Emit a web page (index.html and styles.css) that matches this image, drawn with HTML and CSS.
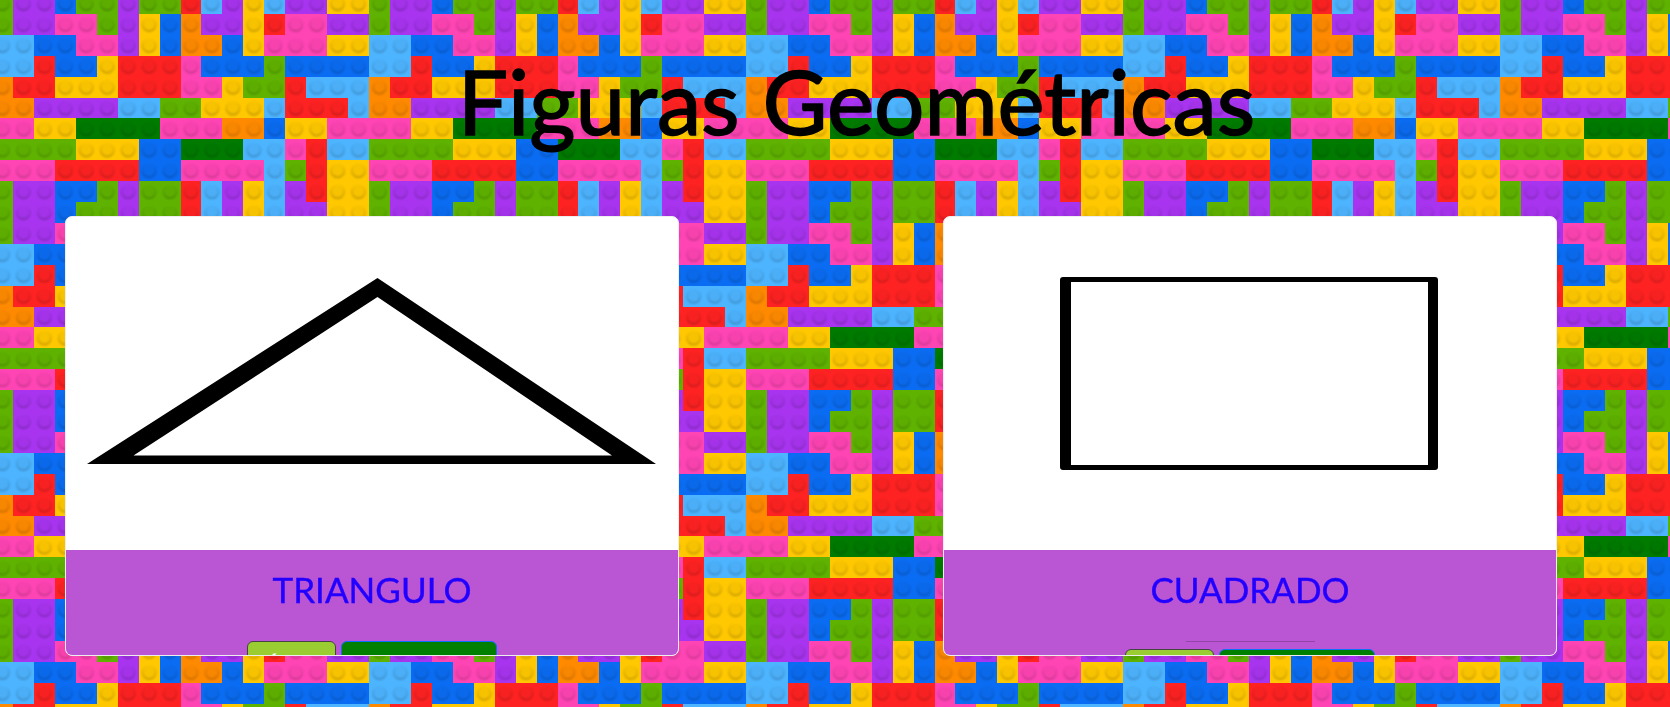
FILE: index.html
```html
<!DOCTYPE html>
<html lang="es">
<head>
	<meta charset="UTF-8">
	<title>Figuras Geométricas</title>
	<link rel="stylesheet" href="styles.css">
	<script src="script.js"></script>
</head>
<body>
	<div id="bricks" class="bricks"></div>
	<h1 class="title">Figuras Geométricas</h1>
	<div class="cards">
		<div class="card">
			<svg class="figure" viewBox="0 0 612 333">
				<path fill-rule="evenodd" d="M311.5 61 L590 247 L21 247 Z M311.5 80 L67.5 238.5 L546 238.5 Z"/>
			</svg>
			<div class="card-body">
				<h2 class="card-title">TRIANGULO</h2>
				<div class="buttons">
					<a class="btn btn-area">Área</a>
					<a class="btn btn-perimeter">Perímetro</a>
				</div>
			</div>
		</div>
		<div class="card">
			<svg class="figure" viewBox="0 0 612 333">
				<path fill-rule="evenodd" d="M119 60 H491 Q494 60 494 63 V250 Q494 253 491 253 H119 Q116 253 116 250 V63 Q116 60 119 60 Z M127 65 V248 H484 V65 Z"/>
			</svg>
			<div class="card-body">
				<h2 class="card-title">CUADRADO</h2>
				<div class="rule"></div>
				<div class="buttons">
					<a class="btn btn-area">Área</a>
					<a class="btn btn-perimeter">Perímetro</a>
				</div>
			</div>
		</div>
	</div>
</body>
</html>
```

FILE: styles.css
```css
*{
	margin: 0px;
	padding: 0px;
	box-sizing: border-box;
}
body{
	height: 707px;
	overflow: hidden;
	font-family: "Lato", "Liberation Sans", sans-serif;
}
.bricks{
	position: fixed;
	top: 0;
	left: 0;
	width: 100%;
	height: 100%;
	z-index: -1;
}
.bricks svg{
	display: block;
	width: 100%;
	height: 100%;
}
.b-g{fill: #5fb300;}
.b-v{fill: #a834f0;}
.b-b{fill: #0a6cf2;}
.b-l{fill: #4db4ff;}
.b-k{fill: #ff44b4;}
.b-y{fill: #ffc800;}
.b-r{fill: #ff2222;}
.b-o{fill: #ff8a00;}
.b-d{fill: #007b00;}

.title{
	height: 216px;
	padding: 47px 0px 0px 43px;
	text-align: center;
	font-size: 89px;
	line-height: 107px;
	font-weight: 400;
	color: #000;
	-webkit-text-stroke: 1.5px #000;
}
.cards{
	display: flex;
	gap: 264px;
	padding-left: 65px;
}
.card{
	width: 614px;
	height: 440px;
	overflow: hidden;
	background-color: #fff;
	border: 1px solid #eee;
	border-radius: 7px;
}
.figure{
	display: block;
	width: 612px;
	height: 333px;
}
.card-body{
	height: 105px;
	padding-top: 18px;
	background-color: #ba55d3;
	text-align: center;
}
.card-title{
	height: 73px;
	font-size: 35px;
	line-height: 42px;
	font-weight: 400;
	color: #2200ff;
	-webkit-text-stroke: 0.4px #2200ff;
}
.rule{
	width: 129px;
	height: 1px;
	margin: 0px auto 7px;
	background-color: rgba(0,0,0,0.2);
}
.buttons{
	display: flex;
	justify-content: center;
	gap: 5px;
}
.btn{
	display: block;
	height: 48px;
	padding: 6px 0px 0px;
	font-size: 24px;
	line-height: 36px;
	color: #fff;
	text-align: center;
	border-radius: 6px;
	border: 1px solid;
}
.btn-area{
	width: 89px;
	padding-right: 6px;
	background-color: #9acd32;
	border-color: #444;
}
.btn-perimeter{
	width: 156px;
	background-color: #008000;
	border-color: #0d6efd;
}
```

FILE: script.js
```js
window.onload=function(){
	// one repeat of the wall, a letter per stud
	var rows=[
		'gvvbggvggrlvylvvyy',
		'gvvkkgvybovvyrkkvv',
		'llbbkkvybooby'+'kkkyy',
		'llrbbyrrrkbbbgbbbb',
		'orryyyrrrkkyggrlll',
		'oovvvvllggyyylrrrl',
		'kkyyddddkkkoobyykk',
		'ggggyyybbdddllkrll',
		'kkkrrrrbbkkkklgryy',
		'gvvbbgvggrlvylvryy'
	];
	var w=377/18;
	var h=209/10;
	var cells='';
	var studs='';
	for(var i=0;i<rows.length;i++){
		for(var j=0;j<rows[i].length;j++){
			cells+='<rect class="b-'+rows[i].charAt(j)+'" x="'+(j*w)+'" y="'+(i*h)+'" width="'+w+'" height="'+h+'"/>';
			studs+='<circle cx="'+(j*w+w/2)+'" cy="'+(i*h+h/2)+'" r="6.8"/>';
		}
	}
	document.getElementById('bricks').innerHTML=
		'<svg xmlns="http://www.w3.org/2000/svg">'+
		'<defs>'+
		'<linearGradient id="ring" x1="0" y1="0" x2="0" y2="1">'+
		'<stop offset="0" stop-color="#000" stop-opacity="0"/>'+
		'<stop offset="1" stop-color="#000" stop-opacity="0.2"/>'+
		'</linearGradient>'+
		'<filter id="soft"><feGaussianBlur stdDeviation="0.9"/></filter>'+
		'<pattern id="wall" patternUnits="userSpaceOnUse" x="-8" y="-7" width="377" height="209">'+
		'<g shape-rendering="crispEdges">'+cells+'</g>'+
		'<g fill="#000" fill-opacity="0.03" stroke="url(#ring)" stroke-width="1.8" filter="url(#soft)">'+studs+'</g>'+
		'</pattern>'+
		'</defs>'+
		'<rect width="100%" height="100%" fill="url(#wall)"/>'+
		'</svg>';
};
```
